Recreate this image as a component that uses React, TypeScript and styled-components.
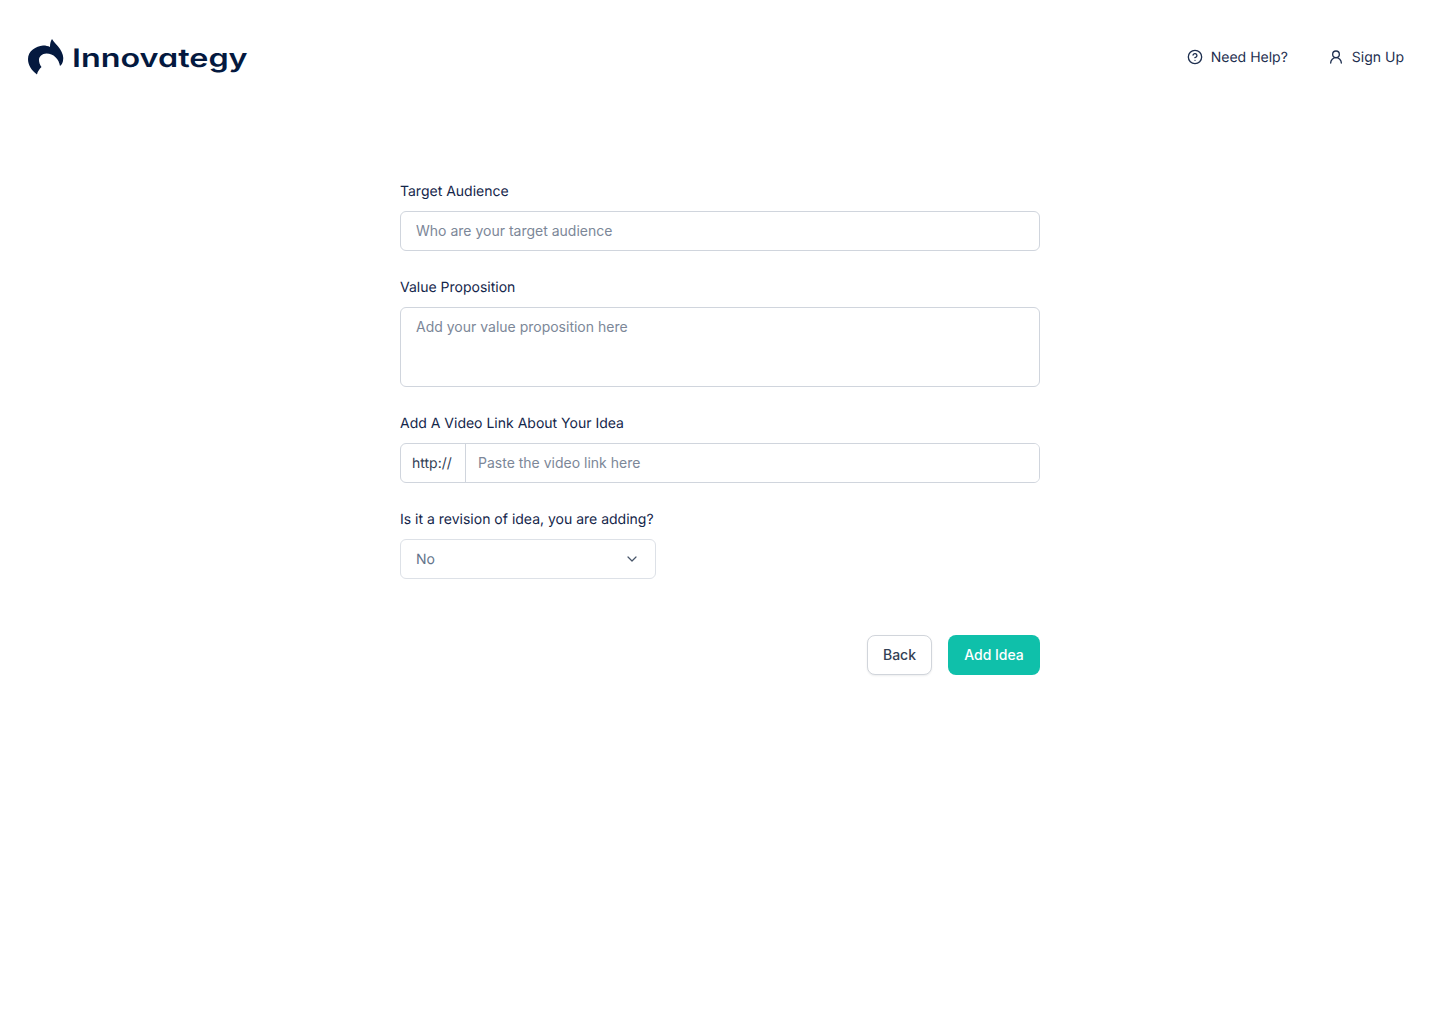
import styled, { createGlobalStyle } from 'styled-components';
import { ChevronDown, CircleHelp, UserRound } from 'lucide-react';

const GlobalStyle = createGlobalStyle`
    html, body {
        margin: 0;
        background: #ffffff;
        font-family: 'Inter', 'Liberation Sans', sans-serif;
        color: #0f1f3d;
        text-rendering: geometricPrecision;
    }
    * {
        box-sizing: border-box;
    }
`;

const App = () => {
    return (
        <Page>
            <GlobalStyle />
            <Header>
                <Logo>
                    <svg width='36' height='37' viewBox='0 0 36 37' fill='#04193f'>
                        <path d='M9 35.5 C3 31 0 26 0 20 C0 12 8 7 15 6.5 C18 6.5 20 7 22 8 C22 5 22.5 2 24 0 C25.5 3 29.5 6 32 10 C34.5 14 36 18 35 22 C34.5 24 33.5 26 32 27 C31 20 25.5 14.5 18.5 14.5 C14 14.5 11 17.5 11 21 C11 23.5 12 26 13.5 28 C11.5 30 9.5 32.5 9 35.5 Z' />
                    </svg>
                    <LogoText>Innovategy</LogoText>
                </Logo>
                <Nav>
                    <NavLink>
                        <CircleHelp size={16} strokeWidth={2} />
                        <NavText>Need Help?</NavText>
                    </NavLink>
                    <NavLink>
                        <UserRound size={16} strokeWidth={2} />
                        <NavText>Sign Up</NavText>
                    </NavLink>
                </Nav>
            </Header>

            <Form>
                <Field>
                    <Label>Target Audience</Label>
                    <TextInput placeholder='Who are your target audience' />
                </Field>
                <Field>
                    <Label>Value Proposition</Label>
                    <TextArea placeholder='Add your value proposition here' />
                </Field>
                <Field>
                    <Label>Add A Video Link About Your Idea</Label>
                    <InputGroup>
                        <Prefix>http://</Prefix>
                        <GroupInput placeholder='Paste the video link here' />
                    </InputGroup>
                </Field>
                <Field>
                    <Label>Is it a revision of idea, you are adding?</Label>
                    <SelectBox>
                        <SelectValue>No</SelectValue>
                        <ChevronDown size={16} strokeWidth={1.8} color='#475569' />
                    </SelectBox>
                </Field>
                <Actions>
                    <BackButton type='button'>Back</BackButton>
                    <SubmitButton type='button'>Add Idea</SubmitButton>
                </Actions>
            </Form>
        </Page>
    );
};

export default App;

const Page = styled.div`
    min-height: 1024px;
`;

const Header = styled.header`
    display: flex;
    align-items: center;
    justify-content: space-between;
    height: 114px;
    padding: 0 36px 0 28px;
`;

const Logo = styled.div`
    display: flex;
    align-items: center;
    gap: 8px;
`;

const LogoText = styled.span`
    display: inline-block;
    margin-top: 4px;
    font-family: 'Inter', sans-serif;
    font-feature-settings: 'cv11';
    font-size: 25.5px;
    font-weight: 600;
    line-height: 38px;
    color: #04193f;
    transform: scaleX(1.268);
    transform-origin: left center;
`;

const Nav = styled.nav`
    display: flex;
    align-items: center;
    gap: 40px;
`;

const NavLink = styled.a`
    display: flex;
    align-items: center;
    gap: 8px;
    font-size: 14px;
    line-height: 20px;
    color: #1e2f4f;
`;

const NavText = styled.span`
    padding-top: 2px;
`;

const Form = styled.form`
    display: flex;
    flex-direction: column;
    gap: 26px;
    width: 640px;
    margin: 0 auto;
    padding-top: 67px;
`;

const Field = styled.div`
    display: flex;
    flex-direction: column;
    gap: 8px;
`;

const Label = styled.label`
    font-size: 14px;
    line-height: 22px;
    color: #14264a;
`;

const TextInput = styled.input`
    height: 40px;
    padding: 0 15px 1px;
    border: 1px solid #d0d5dd;
    border-radius: 6px;
    font: inherit;
    font-size: 14px;
    outline: none;

    &::placeholder {
        color: #7c8798;
        opacity: 1;
    }
`;

const TextArea = styled.textarea`
    display: block;
    height: 80px;
    padding: 9px 15px;
    border: 1px solid #d0d5dd;
    border-radius: 6px;
    font: inherit;
    font-size: 14px;
    line-height: 20px;
    resize: none;
    outline: none;

    &::placeholder {
        color: #7c8798;
        opacity: 1;
    }
`;

const InputGroup = styled.div`
    display: flex;
    height: 40px;
    border: 1px solid #d0d5dd;
    border-radius: 6px;
    overflow: hidden;
`;

const Prefix = styled.span`
    display: flex;
    align-items: center;
    width: 65px;
    padding: 1px 0 0 11px;
    border-right: 1px solid #d0d5dd;
    font-size: 14px;
    color: #334155;
`;

const GroupInput = styled.input`
    flex: 1;
    padding: 0 12px 1px;
    border: 0;
    font: inherit;
    font-size: 14px;
    outline: none;

    &::placeholder {
        color: #7c8798;
        opacity: 1;
    }
`;

const SelectBox = styled.div`
    display: flex;
    align-items: center;
    justify-content: space-between;
    width: 256px;
    height: 40px;
    padding: 0 15px;
    border: 1px solid #dde1e7;
    border-radius: 6px;
    font-size: 14px;
    line-height: 20px;
    color: #64748b;
`;

const SelectValue = styled.span`
    padding-top: 2px;
`;

const Actions = styled.div`
    display: flex;
    justify-content: flex-end;
    gap: 16px;
    margin-top: 30px;
`;

const BackButton = styled.button`
    width: 65px;
    height: 40px;
    padding: 0 0 1px;
    border: 1px solid #d1d5db;
    border-radius: 8px;
    background: #ffffff;
    box-shadow: 0 1px 2px rgba(15, 23, 42, 0.08);
    font: inherit;
    font-size: 14px;
    font-weight: 500;
    color: #334155;
`;

const SubmitButton = styled.button`
    width: 92px;
    height: 40px;
    padding: 0 0 1px;
    border: 0;
    border-radius: 8px;
    background: #0fc0aa;
    font: inherit;
    font-size: 14px;
    font-weight: 500;
    color: #ffffff;
`;
